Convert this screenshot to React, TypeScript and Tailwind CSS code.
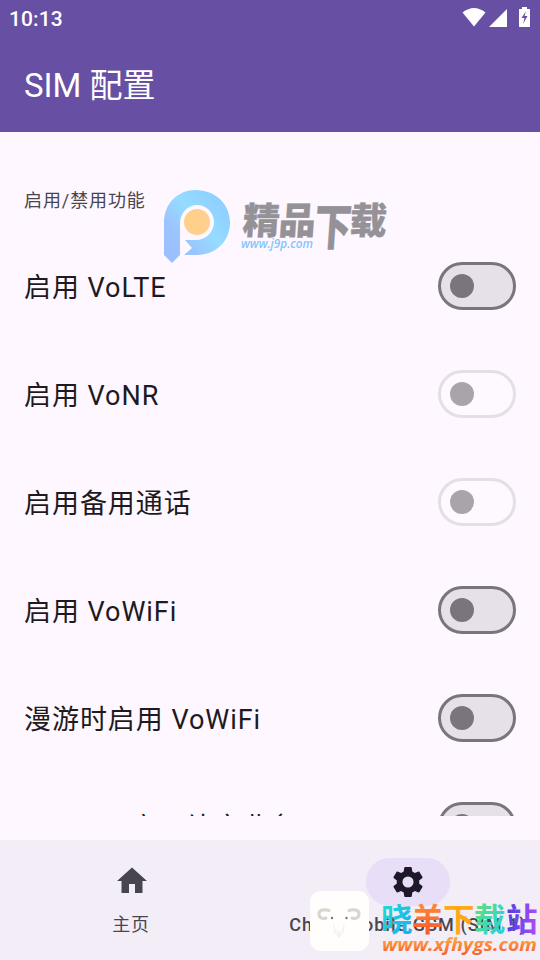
import React from "react";

const rows = [
  { label: "启用 VoLTE", disabled: false },
  { label: "启用 VoNR", disabled: true },
  { label: "启用备用通话", disabled: true },
  { label: "启用 VoWiFi", disabled: false },
  { label: "漫游时启用 VoWiFi", disabled: false },
  { label: "用于 UT 启用补充业务", disabled: false },
];

function Toggle({ disabled }: { disabled: boolean }) {
  return (
    <div
      className={
        disabled
          ? "flex h-12 w-[78px] shrink-0 items-center rounded-full border-[3px] border-[#e4dee6] bg-[#fef8ff] pl-[9px]"
          : "flex h-12 w-[78px] shrink-0 items-center rounded-full border-[3px] border-[#79747e] bg-[#e6e0e9] pl-[9px]"
      }
    >
      <div className={disabled ? "size-6 rounded-full bg-[#a9a4ab]" : "size-6 rounded-full bg-[#79747e]"} />
    </div>
  );
}

function J9pMark() {
  return (
    <div className="absolute left-[160px] top-[186px] h-20 w-[230px]">
      <svg className="size-full" viewBox="0 0 230 80">
        <defs>
          <linearGradient id="pBlue" x1="0" y1="1" x2="1" y2="0">
            <stop stopColor="#9dbcff" />
            <stop offset=".3" stopColor="#9bc4ff" />
            <stop offset=".55" stopColor="#95dcff" />
            <stop offset="1" stopColor="#8bcaff" />
          </linearGradient>
        </defs>
        <path
          fill="url(#pBlue)"
          d="M4 37C4 17 18 4 36 4c19 0 34 14 34 32.500S56 69 37 69H24l8-7-7-8h11c10 0 18-8 18-18s-8-17-17-17-17 8-17 18v32l-8 8-8-8Z"
        />
        <circle cx="37" cy="36" r="13" fill="#ffd08c" />
        <g
          fill="#949197"
          stroke="#949197"
          strokeWidth=".3"
          fontFamily="'Noto Sans CJK SC', sans-serif"
          fontWeight="900"
          fontSize="37"
          transform="translate(82 48) skewX(-4)"
        >
          <text x="0">精</text>
          <text x="36">品</text>
          <text transform="translate(72 11) scale(1 1.340)">下</text>
          <text x="107">载</text>
        </g>
        <text x="81" y="62" fill="#83c6fa" fontFamily="'Open Sans', sans-serif" fontStyle="italic" fontWeight="600" fontSize="13" textLength="72" lengthAdjust="spacingAndGlyphs">
          www.j9p.com
        </text>
      </svg>
    </div>
  );
}

function SheepMark() {
  return (
    <div className="absolute bottom-0 left-[305px] h-[75px] w-[235px]">
      <svg className="size-full" viewBox="0 0 235 75">
        <defs>
          <linearGradient id="orange" x1="0" y1="0" x2="0" y2="1">
            <stop offset=".3" stopColor="#ffa53c" />
            <stop offset="1" stopColor="#f4582a" />
          </linearGradient>
          <linearGradient id="xiao" x1="0" y1="0" x2="1" y2="1">
            <stop stopColor="#25e2d0" />
            <stop offset="1" stopColor="#18a9f5" />
          </linearGradient>
          <linearGradient id="yang" x1="0" y1="0" x2="0" y2="1">
            <stop stopColor="#ff9a35" />
            <stop offset="1" stopColor="#f5502b" />
          </linearGradient>
          <linearGradient id="zai" x1="0" y1="0" x2="1" y2="1">
            <stop stopColor="#65e36c" />
            <stop offset="1" stopColor="#25cee8" />
          </linearGradient>
          <linearGradient id="zhan">
            <stop stopColor="#4a3de8" />
            <stop offset="1" stopColor="#b04cf5" />
          </linearGradient>
        </defs>
        <rect x="5" y="6" width="59" height="60" rx="11" fill="#fffefd" />
        <g fill="none" strokeLinecap="round">
          <path d="M24 25.500c-6-2-10.500 0-10 4 .5 4 4 4.500 7 3.500M44 25.500c6-2 10.500 0 10 4-.5 4-4 4.500-7 3.500" stroke="#d9d5cc" strokeWidth="3" />
          <path d="M29 40l1 7 4 5 4-5 1-7M31.500 46l2.500 2 2.500-2M34 48v3" stroke="#eeecea" />
        </g>
        <circle cx="27" cy="33" r="1.200" fill="#777" />
        <circle cx="41.500" cy="33" r="1.200" fill="#777" />
        <g fontFamily="'Noto Sans CJK SC', sans-serif" fontWeight="700" fontSize="31.500">
          <text x="76" y="46" fill="url(#xiao)">晓</text>
          <text x="107" y="46" fill="url(#yang)">羊</text>
          <text x="138" y="46" fill="#ffa915">下</text>
          <text x="169" y="46" fill="url(#zai)">载</text>
          <text x="201" y="46" fill="url(#zhan)">站</text>
        </g>
        <text x="77" y="66" fill="url(#orange)" fontFamily="'Open Sans', sans-serif" fontStyle="italic" fontWeight="700" fontSize="18.500" textLength="155" lengthAdjust="spacingAndGlyphs">
          www.xfhygs.com
        </text>
      </svg>
    </div>
  );
}

export default function App() {
  return (
    <div className="relative flex h-[960px] w-[540px] flex-col overflow-hidden bg-[#fef7ff] font-[Roboto,'Noto_Sans_CJK_SC',sans-serif] text-[#1d1b20]">
      <header className="h-[132px] shrink-0 bg-[#6750a4] text-white">
        <div className="flex h-9 items-center justify-between pl-[9px]">
          <span className="pt-[3px] text-[21px] font-medium tracking-[0.1px]">10:13</span>
          <svg className="h-9 w-20" viewBox="460 0 80 36" fill="#fff">
            <path d="M462.500 12.500Q474 3.500 485.500 12.500L474 26.500Z" />
            <path d="M507 9V27H489Z" />
            <path d="M519 9h3V7h5v2h3v18h-11Z" />
            <path d="m526 11-4.500 7h3l-1.500 6 4.500-8h-3z" fill="#6750a4" />
          </svg>
        </div>
        <h1 className="flex h-24 items-center pl-6 pt-[3px] text-[33px]">SIM 配置</h1>
      </header>
      <main className="h-[684px] shrink-0 overflow-hidden px-6 pt-12">
        <h2 className="flex h-[39px] items-center pt-[2px] text-[18px] tracking-[0.9px] text-[#49454f]">启用/禁用功能</h2>
        <div className="pt-[13px]">
          {rows.map((r) => (
            <div key={r.label} className="flex h-[108px] items-center justify-between">
              <span className="pt-1 text-[27px] tracking-[0.95px]">{r.label}</span>
              <Toggle disabled={r.disabled} />
            </div>
          ))}
        </div>
      </main>
      <nav className="mt-6 flex h-[120px] shrink-0 bg-[#f3edf7] text-[18px] text-[#49454f]">
        <div className="flex w-[264px] flex-col items-center pt-[18px]">
          <svg className="h-12 w-9" viewBox="0 -3.300 24 32" fill="currentColor">
            <path d="M10 20v-6h4v6h5v-8h3L12 3 2 12h3v8z" />
          </svg>
          <span className="mt-[5px] pr-[2px] tracking-[0.75px]">主页</span>
        </div>
        <div className="flex w-[276px] flex-col items-center pl-3 pt-[18px]">
          <div className="flex h-12 w-[84px] items-center justify-center rounded-full bg-[#e8def8] text-[#1d192b]">
            <svg className="size-9" viewBox="0 0 24 24" fill="currentColor">
              <path d="M19.430 12.980c.04-.32.07-.64.07-.98s-.03-.66-.07-.98l2.110-1.650c.19-.15.24-.42.12-.64l-2-3.460c-.12-.22-.39-.3-.61-.22l-2.490 1c-.52-.4-1.080-.73-1.690-.98l-.38-2.650C14.460 2.180 14.250 2 14 2h-4c-.25 0-.46.18-.49.42l-.38 2.650c-.61.25-1.170.59-1.690.98l-2.490-1c-.23-.09-.49 0-.61.22l-2 3.460c-.13.22-.07.49.12.64l2.110 1.650c-.04.32-.07.65-.07.98s.03.66.07.98l-2.110 1.650c-.19.15-.24.42-.12.64l2 3.460c.12.22.39.3.61.22l2.490-1c.52.4 1.080.73 1.690.98l.38 2.650c.03.24.24.42.49.42h4c.25 0 .46-.18.49-.42l.38-2.650c.61-.25 1.170-.59 1.690-.98l2.490 1c.23.09.49 0 .61-.22l2-3.460c.12-.22.07-.49-.12-.64zM12 15.700a3.700 3.700 0 1 1 0-7.400 3.700 3.700 0 0 1 0 7.400z" />
            </svg>
          </div>
          <span className="mt-[5px] whitespace-nowrap font-medium tracking-[1.050px]">China Mobile GSM (SIM 1)</span>
        </div>
      </nav>
      <J9pMark />
      <SheepMark />
    </div>
  );
}
